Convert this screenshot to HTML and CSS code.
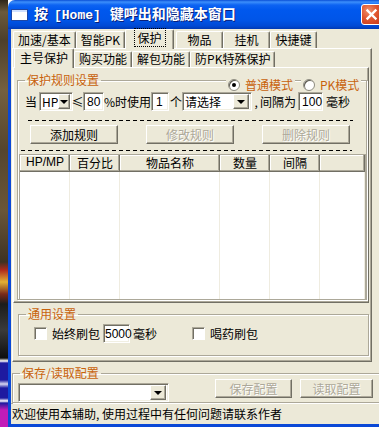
FILE: index.html
```html
<!DOCTYPE html>
<html lang="zh-CN">
  <head>
    <meta charset="UTF-8">
    <title>保护</title>
    <link rel="stylesheet" href="styles.css">
  </head>
  <body>
    <div class="desktop"></div>

    <div class="window">
      <div class="titlebar">
        <span class="app-icon"></span>
        <span class="title">按<span class="mono">[Home]</span>键呼出和隐藏本窗口</span>
        <span class="close">
          <svg width="13" height="13" viewBox="0 0 13 13">
            <path d="M2.5 2.5 L10.5 10.5 M10.5 2.5 L2.5 10.5" stroke="#fff" stroke-width="2.4" stroke-linecap="square" />
          </svg>
        </span>
      </div>

      <div class="frame">
        <div class="tabstrip outer-tabs">
          <span class="tab">加速/基本</span>
          <span class="tab">智能PK</span>
          <span class="tab active"><span class="focus">保护</span></span>
          <span class="tab">物品</span>
          <span class="tab">挂机</span>
          <span class="tab">快捷键</span>
        </div>

        <div class="page outer-page">
          <div class="tabstrip inner-tabs">
            <span class="tab active">主号保护</span>
            <span class="tab">购买功能</span>
            <span class="tab">解包功能</span>
            <span class="tab">防PK特殊保护</span>
          </div>

          <div class="page inner-page">
            <fieldset class="group rules">
              <legend>保护规则设置</legend>

              <div class="mode">
                <span class="radio-item"><span class="radio checked"></span>普通模式</span>
                <span class="radio-item"><span class="radio"></span>PK模式</span>
              </div>

              <div class="rule-row">
                <span>当</span>
                <span class="combo hp"><span class="combo-text">HP</span><span class="drop"></span></span>
                <span class="le">≤</span>
                <span class="field pct">80</span>
                <span>%时使用</span>
                <span class="field count">1</span>
                <span class="unit">个</span>
                <span class="combo item"><span class="combo-text">请选择</span><span class="drop"></span></span>
                <span class="comma">,</span>
                <span>间隔为</span>
                <span class="field interval">100</span>
                <span class="unit">毫秒</span>
              </div>

              <div class="dashes first"></div>

              <div class="rule-buttons">
                <button class="btn">添加规则</button>
                <button class="btn" disabled>修改规则</button>
                <button class="btn" disabled>删除规则</button>
              </div>

              <div class="dashes second"></div>

              <div class="list">
                <div class="list-head">
                  <span>HP/MP</span>
                  <span>百分比</span>
                  <span>物品名称</span>
                  <span>数量</span>
                  <span>间隔</span>
                  <span></span>
                </div>
                <div class="list-body">
                  <div class="col"></div>
                  <div class="col"></div>
                  <div class="col"></div>
                  <div class="col"></div>
                  <div class="col"></div>
                  <div class="col"></div>
                </div>
              </div>
            </fieldset>
          </div>

          <fieldset class="group general">
            <legend>通用设置</legend>
            <div class="general-row">
              <span class="check"></span>
              <span>始终刷包</span>
              <span class="field refresh">5000</span>
              <span class="unit">毫秒</span>
              <span class="check second"></span>
              <span>喝药刷包</span>
            </div>
          </fieldset>
        </div>

        <fieldset class="group config">
          <legend>保存/读取配置</legend>
          <div class="config-row">
            <span class="combo config-list"><span class="combo-text"></span><span class="drop"></span></span>
            <button class="btn save" disabled>保存配置</button>
            <button class="btn load" disabled>读取配置</button>
          </div>
        </fieldset>

        <div class="statusbar">欢迎使用本辅助, 使用过程中有任何问题请联系作者</div>
      </div>
    </div>
  </body>
</html>
```

FILE: styles.css
```css
* {
  margin: 0;
  padding: 0;
  box-sizing: border-box;
}

body {
  width: 379px;
  height: 427px;
  overflow: hidden;
  display: flex;
  font: 12px/14px "Noto Sans CJK SC", "Liberation Sans", sans-serif;
  color: #000;
}

.desktop {
  flex: none;
  width: 8px;
  background: linear-gradient(to bottom,
    #2e2618 0, #6b5a3c 12px, #4d3f2a 40px, #74603f 90px, #55452e 150px,
    #6a5638 210px, #3e3222 262px, #b02a1c 270px, #e2b035 282px, #7a2a1a 294px,
    #1c1c1c 304px, #3a3a3a 330px, #0e0e0e 358px, #fff 361px, #1e1aa0 363px,
    #1e1aa0 380px, #d8d8f0 384px, #1e1aa0 388px, #1e1aa0 398px, #fff 401px,
    #1e1aa0 403px, #c21cb8 410px, #c21cb8 427px);
}

.window {
  flex: none;
  width: 378px;
  display: flex;
  flex-direction: column;
}

/* title bar */

.titlebar {
  flex: none;
  height: 29px;
  display: flex;
  align-items: center;
  padding-left: 4px;
  border-radius: 7px 7px 0 0;
  background: linear-gradient(to bottom,
    #0a4fd6 0, #3c8ffb 2px, #0d63f2 5px, #0058ee 10px, #0055e8 20px, #0049d4 26px, #0039b3 29px);
  color: #fff;
}

.app-icon {
  width: 15px;
  height: 10px;
  background: #fff;
  border-top: 2px solid #cfe0ff;
  box-shadow: 0 0 0 1px #1d47a6;
}

.title {
  margin-left: 7px;
  font-weight: bold;
  font-size: 14px;
  line-height: 16px;
  text-shadow: 1px 1px #0a1f7a;
  white-space: nowrap;
}

.title .mono {
  margin: 0 9px 0 6px;
  font-family: "Liberation Mono", monospace;
  font-size: 13px;
}

.close {
  margin-left: auto;
  margin-right: 4px;
  width: 21px;
  height: 21px;
  display: flex;
  align-items: center;
  justify-content: center;
  border: 1px solid #fff;
  border-radius: 3px;
  background: radial-gradient(circle at 35% 30%, #f0906c 0, #e0562f 45%, #c2351a 100%);
}

/* client area */

.frame {
  flex: 1;
  display: flex;
  flex-direction: column;
  background: #ece9d8;
  border-left: 3px solid #0a48d6;
  border-bottom: 3px solid #0a48d6;
}

.tabstrip {
  flex: none;
  display: flex;
  align-items: flex-end;
  position: relative;
  z-index: 1;
}

.outer-tabs {
  height: 19px;
  padding-left: 2px;
}

.inner-tabs {
  height: 18px;
  padding-left: 1px;
}

.tab {
  height: 17px;
  min-width: 47px;
  padding: 0 4px;
  border: 1px solid;
  border-color: #fff #716f64 transparent #fff;
  border-bottom: none;
  box-shadow: inset -1px 0 #aca899;
  border-radius: 2px 2px 0 0;
  line-height: 15px;
  text-align: center;
  white-space: nowrap;
  background: #ece9d8;
}

.inner-tabs .tab {
  height: 16px;
  padding: 0 4px;
  line-height: 14px;
}

.tab.active {
  height: 20px;
  min-width: 49px;
  margin: 0 2px -1px 0;
  line-height: 16px;
}

.inner-tabs .tab.active {
  height: 20px;
  margin: 0 0 -1px 0;
  padding: 0 5px;
  line-height: 17px;
}

.focus {
  outline: 1px dotted #000;
  outline-offset: 0;
  padding: 0 3px;
}

.page {
  border: 1px solid;
  border-color: #fff #716f64 #716f64 #fff;
  box-shadow: inset -1px -1px #aca899;
}

.outer-page {
  flex: none;
  margin-left: 1px;
  width: 360px;
  height: 314px;
  display: flex;
  flex-direction: column;
}

.inner-page {
  flex: none;
  width: 356px;
  height: 236px;
}

/* group boxes */

.group {
  position: relative;
  border: 1px solid #aca899;
  box-shadow: inset 1px 1px #fff, 1px 1px #fff;
}

.group legend {
  margin-left: 7px;
  padding: 0 2px;
  color: #c8620c;
  line-height: 12px;
  font-size: 12px;
}

.rules {
  margin: 6px 0 0 3px;
  width: 350px;
  height: 226px;
}

.mode {
  position: absolute;
  left: 208px;
  top: -7px;
  display: flex;
  gap: 6px;
  color: #c8620c;
}

.radio-item {
  display: flex;
  align-items: center;
  gap: 5px;
  padding: 0 2px;
  background: #ece9d8;
  line-height: 12px;
}

.radio {
  width: 12px;
  height: 12px;
  border-radius: 50%;
  background: #fff;
  border: 1px solid #8e8c80;
  box-shadow: inset 1px 1px #5d5b52;
  display: flex;
  align-items: center;
  justify-content: center;
}

.radio.checked::after {
  content: "";
  width: 4px;
  height: 4px;
  border-radius: 50%;
  background: #000;
}

/* controls */

.rule-row {
  display: flex;
  align-items: center;
  height: 19px;
  margin-top: 6px;
  padding-left: 7px;
  white-space: nowrap;
}

.field,
.combo {
  flex: none;
  height: 19px;
  display: flex;
  align-items: center;
  background: #fff;
  border: 1px solid;
  border-color: #aca899 #fff #fff #aca899;
  box-shadow: inset 1px 1px #716f64, inset -1px -1px #f1efe2;
  padding: 0 3px;
  font-family: "Liberation Sans", "Noto Sans CJK SC", sans-serif;
}

.combo {
  padding: 0 2px;
}

.combo-text {
  flex: 1;
  font-family: "Noto Sans CJK SC", sans-serif;
}

.drop {
  width: 16px;
  height: 15px;
  border: 1px solid;
  border-color: #fff #716f64 #716f64 #fff;
  box-shadow: inset -1px -1px #aca899;
  background: #ece9d8;
  display: flex;
  align-items: center;
  justify-content: center;
}

.drop::after {
  content: "";
  border-left: 4px solid transparent;
  border-right: 4px solid transparent;
  border-top: 4px solid #000;
}

.hp {
  width: 34px;
  margin-left: 2px;
}

.le {
  flex: none;
  width: 9px;
  margin-right: 1px;
  display: flex;
  justify-content: center;
}

.pct {
  width: 21px;
}

.count {
  width: 18px;
  padding-left: 4px;
}

.unit {
  margin-left: 1px;
}

.item {
  width: 70px;
}

.comma {
  flex: none;
  width: 8px;
  text-align: center;
}

.interval {
  width: 25px;
  margin: 0 2px;
}

.dashes {
  height: 1px;
  background: repeating-linear-gradient(to right, #000 0 4px, transparent 4px 7px);
}

.dashes.first {
  margin: 9px 13px 0 10px;
}

.dashes.second {
  margin: 6px 14px 0 3px;
}

.rule-buttons {
  display: flex;
  gap: 28px;
  margin-top: 4px;
  padding-left: 12px;
}

.btn {
  width: 88px;
  height: 19px;
  font: inherit;
  line-height: 15px;
  color: #000;
  background: #ece9d8;
  border: 1px solid;
  border-color: #fff #716f64 #716f64 #fff;
  box-shadow: inset -1px -1px #aca899;
}

.btn:disabled {
  color: #aca899;
  text-shadow: 1px 1px #fff;
}

/* list */

.list {
  margin: 3px 0 0 1px;
  width: 347px;
  border: 1px solid #aca899;
  box-shadow: inset 1px 0 #716f64;
}

.list-head,
.list-body {
  display: grid;
  grid-template-columns: 50px 50px 100px 50px 50px 1fr;
}

.list-head span {
  height: 17px;
  text-align: center;
  line-height: 15px;
  background: #ece9d8;
  box-shadow: inset -1px -1px #716f64, inset -2px -2px #aca899, inset 1px 1px #fff;
}

.list-head span:first-child {
  font-family: "Liberation Sans", sans-serif;
}

.list-body {
  height: 127px;
  background: #fff;
}

.col {
  border-right: 1px solid #efece0;
  background: repeating-linear-gradient(to bottom, transparent 0 17px, #efece0 17px 18px);
  background-size: 100% 17.2px;
}

/* general group */

.general {
  margin: 5px 0 0 5px;
  width: 351px;
  height: 48px;
}

.general-row {
  display: flex;
  align-items: center;
  height: 19px;
  margin-top: 4px;
  padding-left: 15px;
}

.check {
  width: 13px;
  height: 13px;
  background: #fff;
  border: 1px solid;
  border-color: #aca899 #fff #fff #aca899;
  box-shadow: inset 1px 1px #716f64;
  margin-right: 5px;
}

.check.second {
  margin-left: 35px;
}

.refresh {
  width: 27px;
  margin: 0 2px 0 3px;
  padding: 0 1px;
}

/* config group */

.config {
  flex: none;
  margin: 5px 0 0 1px;
  width: 380px;
  height: 36px;
  border-right: none;
}

.config-row {
  display: flex;
  align-items: flex-start;
  height: 23px;
}

.config-list {
  width: 151px;
  margin: 4px 0 0 5px;
}

.btn.save {
  width: 77px;
  margin-left: 46px;
}

.btn.load {
  width: 73px;
  margin-left: 8px;
}

.statusbar {
  flex: 1;
  padding-left: 1px;
  line-height: 20px;
  border-top: 1px solid #aca899;
  white-space: nowrap;
}
```
